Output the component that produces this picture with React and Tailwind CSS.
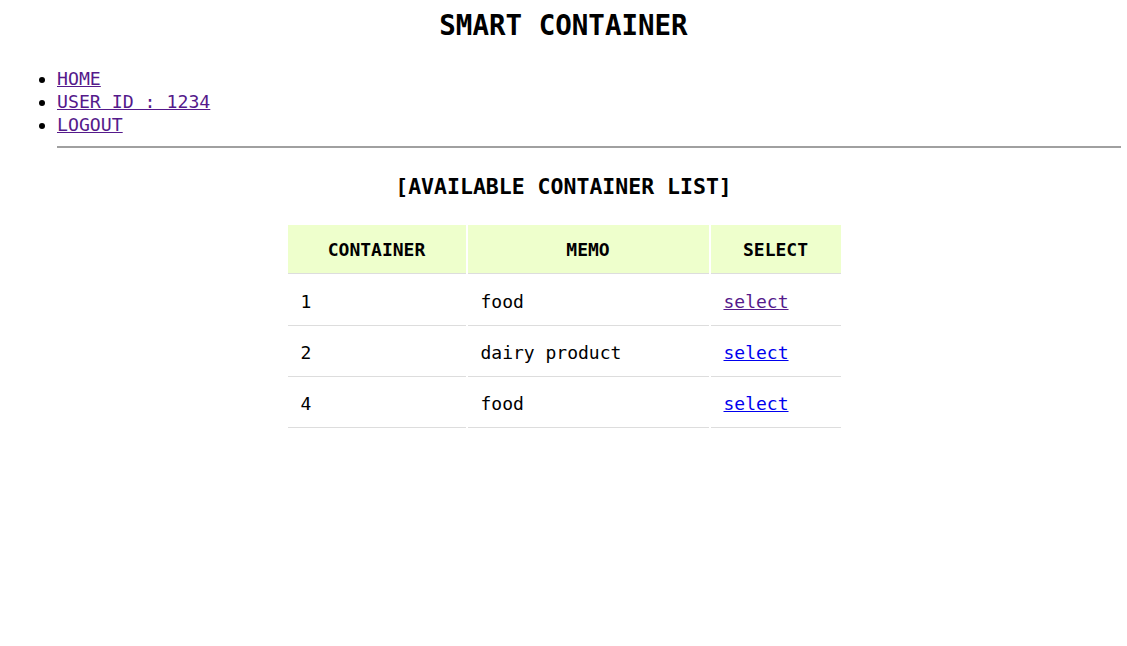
import React from "react";

const rows = [
  { id: "1", memo: "food", visited: true },
  { id: "2", memo: "dairy product", visited: false },
  { id: "4", memo: "food", visited: false },
];

export default function App() {
  return (
    <div
      className="min-h-[646px] bg-white text-black"
      style={{ fontFamily: '"DejaVu Sans Mono", "Liberation Mono", monospace' }}
    >
      {/* Title */}
      <h1 className="pt-[8px] text-center text-[27.5px] font-bold leading-[34px]">
        SMART CONTAINER
      </h1>

      {/* Nav */}
      <ul className="mt-[25px] list-disc pl-[57px] pr-[6px] text-[18.2px] leading-[23px]">
        <li>
          <a href="#" className="text-[#551a8b] underline">HOME</a>
        </li>
        <li>
          <a href="#" className="text-[#551a8b] underline">USER ID : 1234</a>
        </li>
        <li>
          <a href="#" className="text-[#551a8b] underline">LOGOUT</a>
        </li>
        <hr className="mt-[10px] border-t-2 border-[#a0a0a0]" />
      </ul>

      {/* Content */}
      <h2 className="mt-[26px] text-center text-[21.5px] font-bold leading-[26px]">
        [AVAILABLE CONTAINER LIST]
      </h2>

      <div className="mt-[25px] flex justify-center pl-[1px]">
        <table className="border-separate border-spacing-x-[2px] border-spacing-y-0 text-[18px]">
          <thead>
            <tr className="bg-[#eeffcc]">
              <th className="h-[49px] w-[178px] border-b border-[#dddddd] font-bold">CONTAINER</th>
              <th className="h-[49px] w-[241px] border-b border-[#dddddd] font-bold">MEMO</th>
              <th className="h-[49px] w-[130px] border-b border-[#dddddd] font-bold">SELECT</th>
            </tr>
          </thead>
          <tbody>
            {rows.map((r, i) => (
              <tr key={r.id}>
                <td className={`${i === 0 ? "h-[52px] pt-[3px]" : "h-[51px] pt-[2px]"} border-b border-[#dddddd] pl-[13px]`}>{r.id}</td>
                <td className={`${i === 0 ? "h-[52px] pt-[3px]" : "h-[51px] pt-[2px]"} border-b border-[#dddddd] pl-[13px]`}>{r.memo}</td>
                <td className={`${i === 0 ? "h-[52px] pt-[3px]" : "h-[51px] pt-[2px]"} border-b border-[#dddddd] pl-[13px]`}>
                  <a
                    href="#"
                    className={r.visited ? "text-[#551a8b] underline" : "text-[#0000ee] underline"}
                  >
                    select
                  </a>
                </td>
              </tr>
            ))}
          </tbody>
        </table>
      </div>
    </div>
  );
}
